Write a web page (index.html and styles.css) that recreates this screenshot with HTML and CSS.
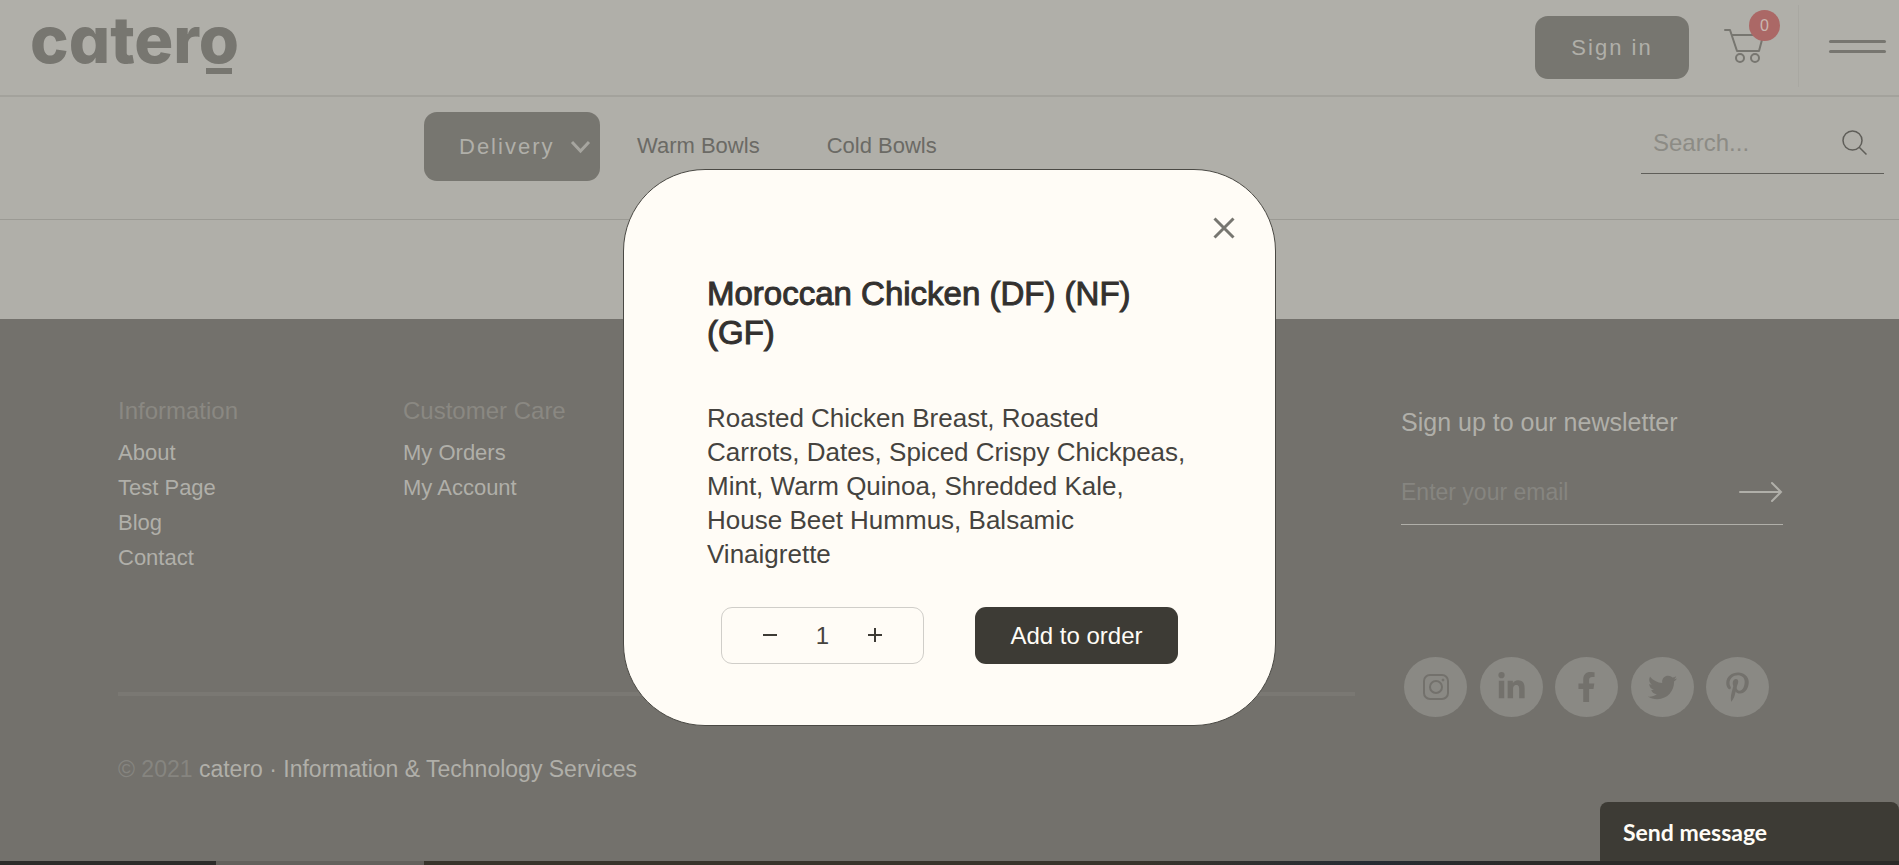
FILE: index.html
```html
<!DOCTYPE html>
<html lang="en">
<head>
    <meta charset="UTF-8">
    <meta name="viewport" content="width=device-width, initial-scale=1.0">
    <title>catero</title>
    <link rel="stylesheet" href="styles.css">
</head>
<body>
    <header class="header">
        <a class="logo" href="#">cater<span class="logo-o">o</span></a>
        <div class="header-right">
            <button class="btn-dark sign-in" type="button">Sign in</button>
            <a class="cart" href="#" aria-label="Cart">
                <svg width="42" height="36" viewBox="0 0 42 36" fill="none" stroke="#777670" stroke-width="2" stroke-linecap="round" stroke-linejoin="round">
                    <path d="M2 2h5l7 21h22l4-15M9 7h31"/>
                    <circle cx="17" cy="30" r="4"/>
                    <circle cx="32" cy="30" r="4"/>
                </svg>
                <span class="badge">0</span>
            </a>
            <button class="menu-toggle" type="button" aria-label="Menu">
                <span></span>
                <span></span>
            </button>
        </div>
    </header>

    <nav class="subnav">
        <button class="btn-dark delivery" type="button">
            Delivery
            <svg width="21" height="14" viewBox="0 0 21 14" fill="none" stroke="#a6a59f" stroke-width="3"><path d="M2 2l8.500 9L19 2"/></svg>
        </button>
        <a href="#">Warm Bowls</a>
        <a href="#">Cold Bowls</a>
        <form class="search">
            <input type="text" placeholder="Search..." aria-label="Search">
            <button type="button" aria-label="Search">
                <svg width="26" height="26" viewBox="0 0 26 26" fill="none" stroke="#5f5e59" stroke-width="1.500"><circle cx="10.500" cy="10.500" r="9.500"/><path d="M17 17l7.500 7.500"/></svg>
            </button>
        </form>
    </nav>

    <main class="content"></main>

    <footer class="footer">
        <div class="footer-left">
            <div class="footer-links">
                <div>
                    <h2>Information</h2>
                    <ul>
                        <li><a href="#">About</a></li>
                        <li><a href="#">Test Page</a></li>
                        <li><a href="#">Blog</a></li>
                        <li><a href="#">Contact</a></li>
                    </ul>
                </div>
                <div>
                    <h2>Customer Care</h2>
                    <ul>
                        <li><a href="#">My Orders</a></li>
                        <li><a href="#">My Account</a></li>
                    </ul>
                </div>
            </div>
            <hr>
            <p class="copyright"><span>© 2021</span> catero · Information &amp; Technology Services</p>
        </div>
        <div class="footer-right">
            <label for="email">Sign up to our newsletter</label>
            <form class="newsletter">
                <input type="email" id="email" placeholder="Enter your email">
                <button type="button" aria-label="Subscribe">
                    <svg width="44" height="22" viewBox="0 0 44 22" fill="none" stroke="#b0afa9" stroke-width="2" stroke-linecap="round"><path d="M1 11h41M33 2l9 9-9 9"/></svg>
                </button>
            </form>
            <div class="social">
                <a href="#" aria-label="Instagram">
                    <svg width="26" height="26" viewBox="0 0 26 26" fill="none" stroke="#73716c" stroke-width="2"><rect x="1" y="1" width="24" height="24" rx="6"/><circle cx="13" cy="13" r="6"/><circle cx="20" cy="6" r="1" fill="#73716c" stroke-width="1"/></svg>
                </a>
                <a href="#" aria-label="LinkedIn">
                    <svg width="27" height="30" viewBox="0 0 448 512" fill="#73716c"><path d="M100.280 448H7.400V148.900h92.880zM53.790 108.100C24.090 108.100 0 83.500 0 53.800a53.790 53.790 0 0 1 107.580 0c0 29.700-24.100 54.300-53.790 54.300zM447.900 448h-92.680V302.400c0-34.700-.7-79.200-48.290-79.200-48.290 0-55.690 37.700-55.690 76.700V448h-92.780V148.900h89.080v40.800h1.300c12.400-23.500 42.690-48.300 87.880-48.300 94 0 111.280 61.900 111.280 142.300V448z"/></svg>
                </a>
                <a href="#" aria-label="Facebook">
                    <svg width="19" height="30" viewBox="0 0 320 512" fill="#73716c"><path d="M279.140 288l14.220-92.660h-88.910v-60.130c0-25.350 12.420-50.060 52.240-50.060h40.420V6.260S260.430 0 225.360 0c-73.220 0-121.080 44.380-121.080 124.720v70.620H22.890V288h81.390v224h100.170V288z"/></svg>
                </a>
                <a href="#" aria-label="Twitter">
                    <svg width="29" height="29" viewBox="0 0 512 512" fill="#73716c"><path d="M459.370 151.716c.325 4.548.325 9.097.325 13.645 0 138.720-105.583 298.558-298.558 298.558-59.452 0-114.680-17.219-161.137-47.106 8.447.974 16.568 1.299 25.340 1.299 49.055 0 94.213-16.568 130.274-44.832-46.132-.975-84.792-31.188-98.112-72.772 6.498.974 12.995 1.624 19.818 1.624 9.421 0 18.843-1.300 27.614-3.573-48.081-9.747-84.143-51.980-84.143-102.985v-1.299c13.969 7.797 30.214 12.670 47.431 13.319-28.264-18.843-46.781-51.005-46.781-87.391 0-19.492 5.197-37.360 14.294-52.954 51.655 63.675 129.300 105.258 216.365 109.807-1.624-7.797-2.599-15.918-2.599-24.040 0-57.828 46.782-104.934 104.934-104.934 30.213 0 57.502 12.670 76.670 33.137 23.715-4.548 46.456-13.320 66.599-25.340-7.798 24.366-24.366 44.833-46.132 57.827 21.117-2.273 41.584-8.122 60.426-16.243-14.292 20.791-32.161 39.308-52.628 54.253z"/></svg>
                </a>
                <a href="#" aria-label="Pinterest">
                    <svg width="23" height="30" viewBox="0 0 384 512" fill="#73716c"><path d="M204 6.500C101.400 6.500 0 74.900 0 185.600 0 256 39.600 296 63.600 296c9.900 0 15.600-27.600 15.600-35.400 0-9.300-23.700-29.100-23.700-67.800 0-80.400 61.200-137.400 140.400-137.400 68.100 0 118.500 38.700 118.500 109.800 0 53.100-21.300 152.700-90.300 152.700-24.900 0-46.200-18-46.200-43.800 0-37.800 26.400-74.400 26.400-113.400 0-66.200-93.900-54.200-93.900 25.800 0 16.800 2.100 35.400 9.600 50.700-13.800 59.400-42 147.900-42 209.100 0 18.900 2.700 37.500 4.500 56.400 3.400 3.800 1.700 3.400 6.900 1.500 50.400-69 48.600-82.500 71.400-172.800 12.300 23.400 44.100 36 69.300 36 106.200 0 153.900-103.500 153.900-196.800C384 71.300 298.200 6.500 204 6.500z"/></svg>
                </a>
            </div>
        </div>
    </footer>
    <div class="bottom-strip"></div>

    <div class="overlay">
        <div class="modal" role="dialog" aria-labelledby="dish">
            <button class="close" type="button" aria-label="Close">
                <svg width="22" height="22" viewBox="0 0 22 22" stroke="#777670" stroke-width="3"><path d="M1.500 1.500l19 19M20.500 1.500l-19 19"/></svg>
            </button>
            <h1 id="dish">Moroccan Chicken (DF) (NF) (GF)</h1>
            <p>Roasted Chicken Breast, Roasted Carrots, Dates, Spiced Crispy Chickpeas, Mint, Warm Quinoa, Shredded Kale, House Beet Hummus, Balsamic Vinaigrette</p>
            <div class="actions">
                <div class="quantity">
                    <button type="button" aria-label="Less">
                        <svg width="14" height="18" viewBox="0 0 14 18" stroke="#3d3b35" stroke-width="2"><path d="M0 8h14"/></svg>
                    </button>
                    <input type="text" value="1" aria-label="Quantity">
                    <button type="button" aria-label="More">
                        <svg width="14" height="18" viewBox="0 0 14 18" stroke="#3d3b35" stroke-width="2"><path d="M0 8h14M7 1v14"/></svg>
                    </button>
                </div>
                <button class="add" type="button">Add to order</button>
            </div>
        </div>
    </div>

    <button class="chat" type="button">Send message</button>
</body>
</html>
```
FILE: styles.css
```css
* {
    box-sizing: border-box;
}
body {
    margin: 0;
    min-height: 100vh;
    display: flex;
    flex-direction: column;
    font-family: "Liberation Sans", Arial, sans-serif;
    font-size: 22px;
    background-color: #b0afa9;
    color: #777670;
}
a {
    color: inherit;
    text-decoration: none;
}
button, input {
    font-family: inherit;
    font-size: 22px;
    color: inherit;
    background: none;
    border: none;
    padding: 0;
}
button {
    cursor: pointer;
}
input {
    outline: none;
    min-width: 0;
}
svg {
    display: block;
}

/* header */
.header {
    display: flex;
    justify-content: space-between;
    height: 97px;
    padding-left: 30px;
    border-bottom: 2px solid #a3a29c;
}
.logo {
    margin-top: 2px;
    font-family: Inter, sans-serif;
    font-size: 65px;
    line-height: 76px;
    font-weight: 800;
    font-feature-settings: "cv11";
}
.logo-o {
    position: relative;
}
.logo-o::after {
    content: "";
    position: absolute;
    left: 7px;
    right: 7px;
    bottom: 5px;
    height: 6px;
    background-color: #777670;
}
.header-right {
    display: flex;
    align-items: center;
    height: 92px;
}
.btn-dark {
    background-color: #777670;
    color: #b0afa9;
    border-radius: 13px;
    letter-spacing: 2px;
}
.sign-in {
    width: 154px;
    height: 63px;
    margin: 3px 34px 0 0;
}
.cart {
    position: relative;
    padding-right: 33px;
}
.badge {
    position: absolute;
    top: -18px;
    left: 26px;
    width: 31px;
    height: 31px;
    border-radius: 50%;
    background-color: #ab6866;
    color: #c9b7b1;
    font-size: 16px;
    line-height: 31px;
    text-align: center;
}
.menu-toggle {
    display: flex;
    flex-direction: column;
    justify-content: center;
    gap: 7px;
    height: 82px;
    padding: 0 13px 0 30px;
    border-left: 1px solid #a9a8a2;
}
.menu-toggle span {
    width: 57px;
    height: 3px;
    border-radius: 2px;
    background-color: #777670;
}

/* category bar */
.subnav {
    display: flex;
    align-items: flex-start;
    height: 123px;
    padding: 15px 15px 0 424px;
    border-bottom: 1px solid #9b9a94;
}
.subnav > a {
    margin-left: 37px;
    line-height: 67px;
    color: #6b6a65;
}
.subnav > a + a {
    margin-left: 67px;
}
.delivery {
    display: flex;
    align-items: center;
    justify-content: space-between;
    width: 176px;
    height: 69px;
    padding: 0 9px 0 35px;
}
.search {
    display: flex;
    align-items: center;
    width: 243px;
    height: 62px;
    margin-left: auto;
    padding: 0 16px 0 12px;
    border-bottom: 1px solid #5f5e59;
}
.search input {
    flex: 1;
    font-size: 24px;
}
.search input::placeholder {
    color: #8c8b85;
}

.content {
    height: 99px;
}

/* footer */
.footer {
    flex: 1;
    display: grid;
    grid-template-columns: 1fr 382px;
    gap: 46px;
    padding: 75px 116px 0 118px;
    background-color: #73716c;
    color: #b0afa9;
}
.footer-links {
    display: grid;
    grid-template-columns: 285px 285px;
}
.footer h2 {
    margin: 0 0 7px;
    font-size: 24px;
    line-height: 34px;
    font-weight: normal;
    color: #8a8882;
}
.footer ul {
    margin: 0;
    padding: 0;
    list-style: none;
    line-height: 35px;
}
.footer hr {
    height: 4px;
    margin: 117px 0 56px;
    border: none;
    background-color: #7a7873;
}
.copyright {
    margin: 0;
    font-size: 23px;
    line-height: 34px;
}
.copyright span {
    color: #868580;
}
.footer-right label {
    display: block;
    margin: 11px 0 32px;
    font-size: 25px;
    line-height: 34px;
}
.newsletter {
    display: flex;
    align-items: center;
    height: 54px;
    padding-bottom: 11px;
    border-bottom: 1px solid #b0afa9;
}
.newsletter input {
    flex: 1;
    height: 36px;
    font-size: 23px;
}
.newsletter input::placeholder {
    color: #868580;
}
.social {
    display: flex;
    justify-content: space-between;
    margin: 132px 14px 0 3px;
}
.social a {
    display: flex;
    align-items: center;
    justify-content: center;
    width: 63px;
    height: 60px;
    border-radius: 50%;
    background-color: #8a8984;
}
.bottom-strip {
    height: 4px;
    background: linear-gradient(to right, #2c2c2a 216px, #63615c 216px, #63615c 424px, #38342b 424px, #38342b 60%, #262c33 72%, #2b2a28 80%);
}

/* dish dialog */
.overlay {
    position: fixed;
    inset: 0;
    display: flex;
    justify-content: center;
    align-items: flex-start;
    padding-top: 169px;
}
.modal {
    position: relative;
    width: 653px;
    padding: 104px 83px 61px;
    border: 1px solid #4a4944;
    border-radius: 82px;
    background-color: #fffcf6;
    color: #45433e;
}
.close {
    position: absolute;
    top: 47px;
    right: 40px;
}
.modal h1 {
    margin: 0 0 49px;
    font-size: 33px;
    line-height: 39px;
    font-weight: normal;
    color: #33312f;
    -webkit-text-stroke: 1px #33312f;
}
.modal p {
    margin: 0 0 36px;
    font-size: 26px;
    line-height: 34px;
}
.actions {
    display: flex;
    gap: 51px;
    padding-left: 14px;
}
.quantity, .add {
    width: 203px;
    height: 57px;
    border-radius: 11px;
}
.quantity {
    display: flex;
    align-items: center;
    justify-content: space-between;
    padding: 0 41px;
    border: 1px solid #d0cec9;
}
.quantity input {
    width: 40px;
    font-size: 24px;
    text-align: center;
}
.add {
    background-color: #3d3b35;
    color: #fffcf6;
    font-size: 24px;
}

/* chat tab */
.chat {
    position: fixed;
    right: 0;
    bottom: 4px;
    width: 299px;
    height: 59px;
    padding-left: 23px;
    border-radius: 8px 8px 0 0;
    background-color: #3d3b35;
    color: #fffcf6;
    font-family: Lato, sans-serif;
    font-size: 23px;
    font-weight: 700;
    text-align: left;
}
```
